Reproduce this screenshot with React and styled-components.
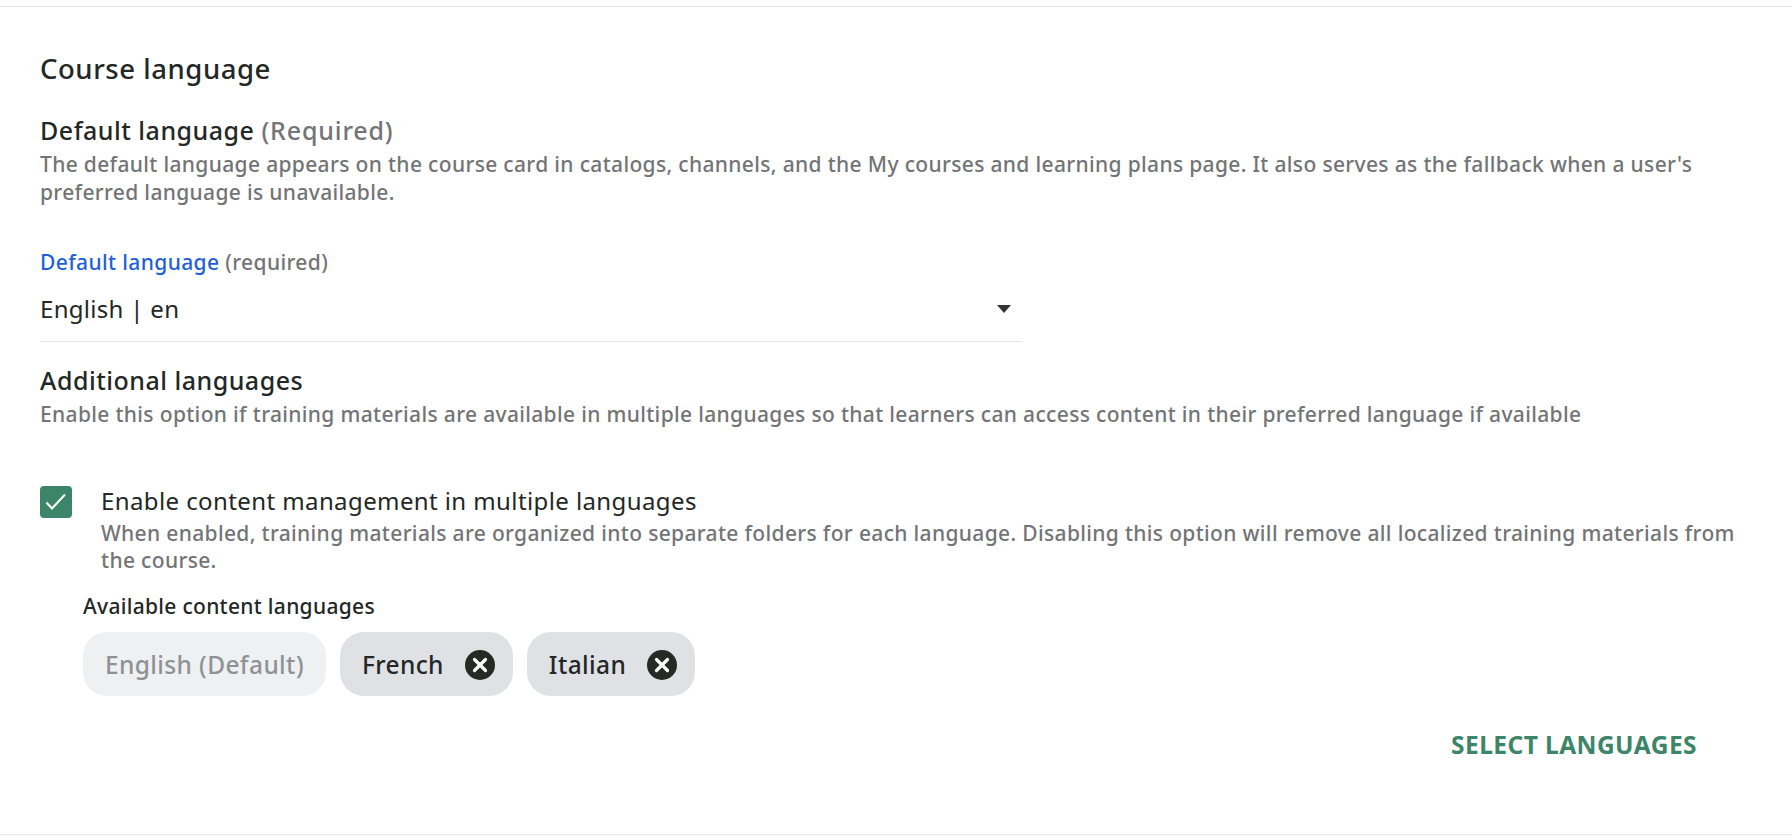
import React from "react";
import styled, { createGlobalStyle } from "styled-components";

const Global = createGlobalStyle`
  html, body { margin: 0; padding: 0; background: #fff; }
  body { font-family: "Noto Sans", "Open Sans", sans-serif; color: #232725; }
`;
const Page = styled.div`
  width: 1792px; height: 836px; box-sizing: border-box; overflow: hidden;
  padding-top: 6px;
`;
const Panel = styled.section`
  height: 829px; box-sizing: border-box;
  border-top: 1px solid #e4e5e7; border-bottom: 1px solid #e4e5e7;
  padding: 44px 40px 0;
`;
const Title = styled.h2`
  margin: 0 0 27px; font-size: 27.5px; letter-spacing: 0.55px; line-height: 36px; font-weight: 500; color: #232725;
`;
const SectionHead = styled.h3`
  margin: 0 0 5px; font-size: 25px; letter-spacing: 0.5px; line-height: 32px; font-weight: 500; color: #232725;
`;
const Muted = styled.span` color: #727476; letter-spacing: 0.85px; `;
const Desc = styled.p`
  margin: 0; font-size: 21px; letter-spacing: 0.34px; line-height: 27.5px; font-weight: 500; color: #727476;
`;
const Field = styled.div` width: 982px; margin-top: 42px; margin-bottom: 22px; `;
const FieldLabel = styled.div`
  font-size: 21px; letter-spacing: 0.38px; line-height: 28px; font-weight: 500; color: #727476;
`;
const Blue = styled.span` color: #1f5fd8; `;
const Select = styled.div`
  display: flex; justify-content: space-between; align-items: center;
  height: 66px; box-sizing: border-box; border-bottom: 1px solid #e4e5e7;
  font-size: 24px; letter-spacing: 0.3px; color: #232725; padding-right: 11px;
`;
const Caret = styled.span`
  width: 0; height: 0; border-left: 7.5px solid transparent; border-right: 7.5px solid transparent;
  border-top: 8px solid #333;
`;
const CheckRow = styled.div` display: flex; gap: 29px; margin-top: 56px; `;
const CheckBox = styled.span`
  flex: none; display: flex; width: 32px; height: 32px; border-radius: 4px; background: #3c8568; margin-top: 1px;
`;
const CheckText = styled.div` flex: 1; `;
const CheckLabel = styled.div`
  font-size: 24px; letter-spacing: 0.4px; line-height: 32px; margin-bottom: 3px; color: #232725;
`;
const Indented = styled.div` padding-left: 43px; margin-top: 18px; `;
const ChipsLabel = styled.div`
  font-size: 21px; letter-spacing: 0.3px; line-height: 26px; font-weight: 500; color: #232725;
`;
const Chips = styled.div` display: flex; gap: 14px; margin-top: 13px; `;
const Chip = styled.div`
  height: 64px; border-radius: 24px; display: flex; align-items: center; gap: 21px;
  padding: ${p => p.$disabled ? "2px 22px 0" : "2px 18px 0 22px"}; box-sizing: border-box;
  font-size: 24.5px; letter-spacing: 0.38px; font-weight: 500;
  background: ${p => p.$disabled ? "#eef0f2" : "#dfe1e5"};
  color: ${p => p.$disabled ? "#8f9295" : "#232725"};
`;
const Actions = styled.div` display: flex; justify-content: flex-end; padding-right: 55px; margin-top: 32px; `;
const ActionBtn = styled.button`
  border: 0; background: none; padding: 0; font: 700 24.5px/34px "Noto Sans", sans-serif;
  letter-spacing: 0.44px; color: #3c8568; text-transform: uppercase;
`;

const Close = () => (
  <svg width="30" height="30" viewBox="0 0 30 30" aria-hidden="true">
    <circle cx="15" cy="15" r="15" fill="#252a25" />
    <path d="M9.5 9.5l11 11M20.5 9.5l-11 11" stroke="#fff" strokeWidth="3.2" strokeLinecap="round" />
  </svg>
);

export default function App() {
  return (
    <Page>
      <Global />
      <Panel>
        <Title>Course language</Title>
        <SectionHead>Default language <Muted>(Required)</Muted></SectionHead>
        <Desc>The default language appears on the course card in catalogs, channels, and the My courses and learning plans page. It also serves as the fallback when a user's preferred language is unavailable.</Desc>
        <Field>
          <FieldLabel><Blue>Default language</Blue> (required)</FieldLabel>
          <Select>English | en<Caret /></Select>
        </Field>
        <SectionHead>Additional languages</SectionHead>
        <Desc>Enable this option if training materials are available in multiple languages so that learners can access content in their preferred language if available</Desc>
        <CheckRow>
          <CheckBox>
            <svg width="32" height="32" viewBox="0 0 32 32" fill="none" aria-hidden="true"><path d="M6.5 16.5l5.5 6L25 8.5" stroke="#fff" strokeWidth="2" /></svg>
          </CheckBox>
          <CheckText>
            <CheckLabel>Enable content management in multiple languages</CheckLabel>
            <Desc>When enabled, training materials are organized into separate folders for each language. Disabling this option will remove all localized training materials from the course.</Desc>
          </CheckText>
        </CheckRow>
        <Indented>
          <ChipsLabel>Available content languages</ChipsLabel>
          <Chips>
            <Chip $disabled>English (Default)</Chip>
            <Chip>French<Close /></Chip>
            <Chip>Italian<Close /></Chip>
          </Chips>
        </Indented>
        <Actions><ActionBtn>Select languages</ActionBtn></Actions>
      </Panel>
    </Page>
  );
}
